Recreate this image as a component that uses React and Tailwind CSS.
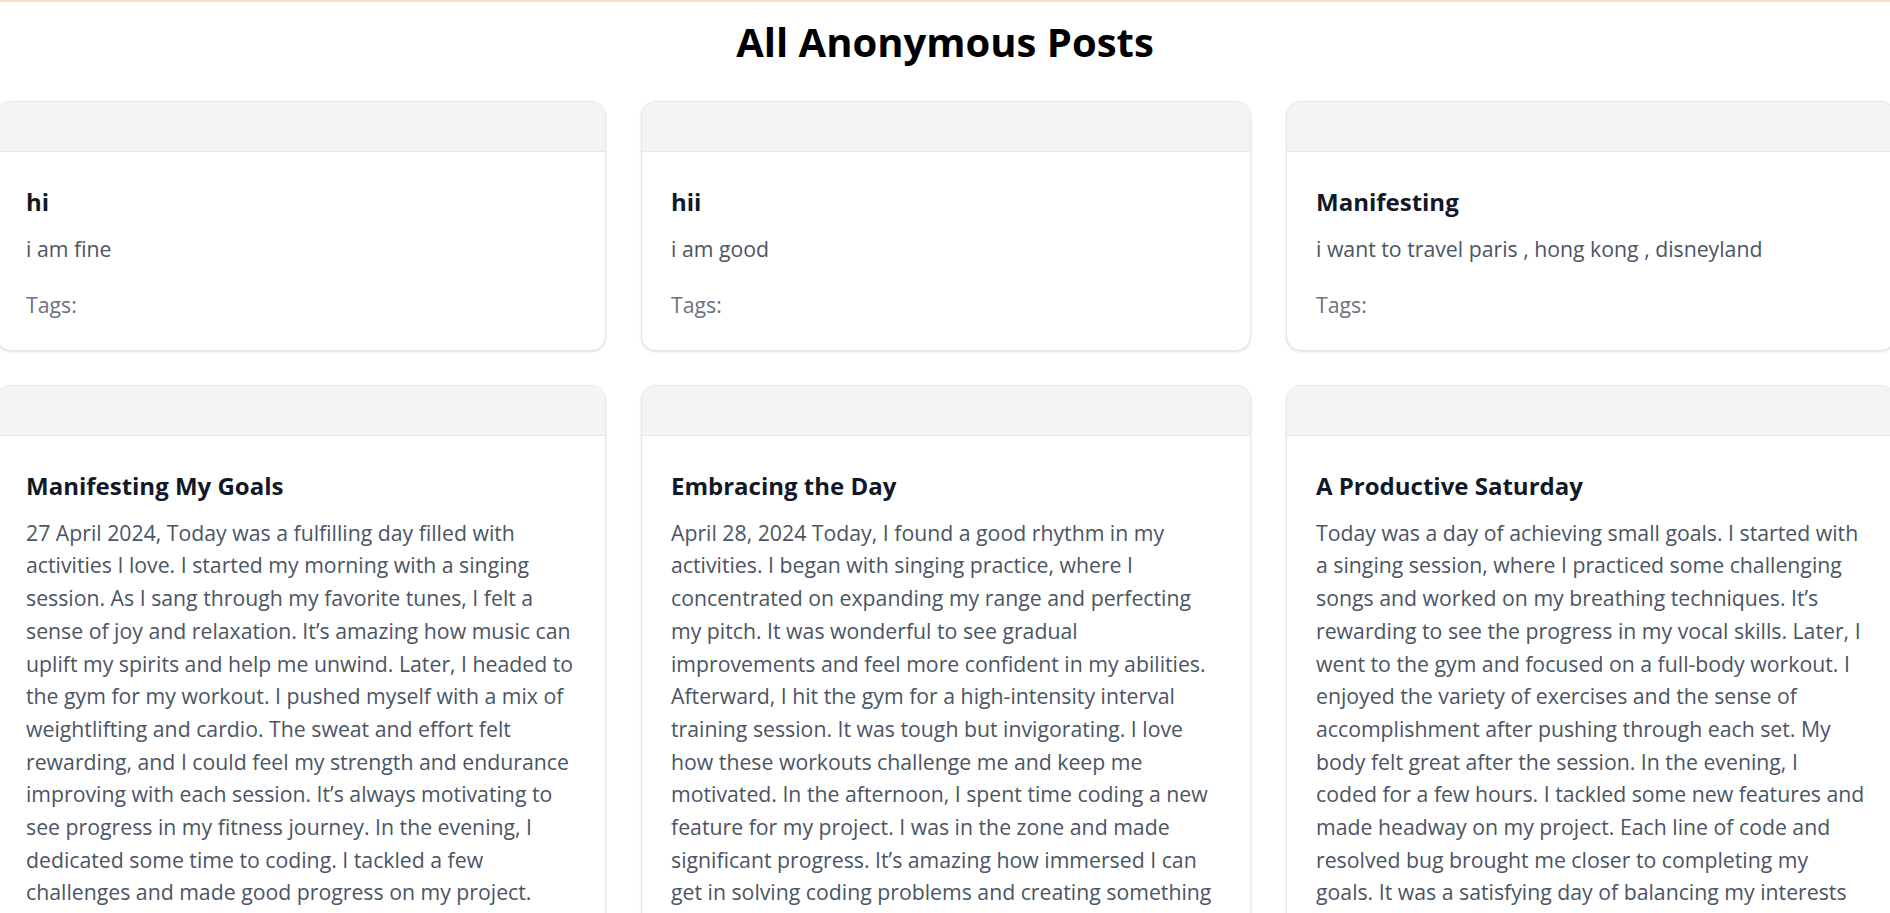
const POSTS = [
  { title: 'hi', body: 'i am fine' },
  { title: 'hii', body: 'i am good' },
  { title: 'Manifesting', body: 'i want to travel paris , hong kong , disneyland' },
  {
    title: 'Manifesting My Goals',
    body: '27 April 2024, Today was a fulfilling day filled with activities I love. I started my morning with a singing session. As I sang through my favorite tunes, I felt a sense of joy and relaxation. It’s amazing how music can uplift my spirits and help me unwind. Later, I headed to the gym for my workout. I pushed myself with a mix of weightlifting and cardio. The sweat and effort felt rewarding, and I could feel my strength and endurance improving with each session. It’s always motivating to see progress in my fitness journey. In the evening, I dedicated some time to coding. I tackled a few challenges and made good progress on my project. Overall, it was a balanced and productive day.',
  },
  {
    title: 'Embracing the Day',
    body: 'April 28, 2024 Today, I found a good rhythm in my activities. I began with singing practice, where I concentrated on expanding my range and perfecting my pitch. It was wonderful to see gradual improvements and feel more confident in my abilities. Afterward, I hit the gym for a high-intensity interval training session. It was tough but invigorating. I love how these workouts challenge me and keep me motivated. In the afternoon, I spent time coding a new feature for my project. I was in the zone and made significant progress. It’s amazing how immersed I can get in solving coding problems and creating something new.',
  },
  {
    title: 'A Productive Saturday',
    body: 'Today was a day of achieving small goals. I started with a singing session, where I practiced some challenging songs and worked on my breathing techniques. It’s rewarding to see the progress in my vocal skills. Later, I went to the gym and focused on a full-body workout. I enjoyed the variety of exercises and the sense of accomplishment after pushing through each set. My body felt great after the session. In the evening, I coded\u00a0for a few hours. I tackled some new features and made headway on my project. Each line of code and resolved bug brought me closer to completing my goals. It was a satisfying day of balancing my interests and responsibilities.',
  },
];

function PostCard({ post }) {
  return (
    <div className="rounded-[15px] border border-[#e5e7eb] bg-white shadow-sm overflow-hidden">
      <div className="h-[50px] bg-[#f3f4f6] border-b border-[#e5e7eb]" />
      <div className="pt-[32px] pb-[30px] pl-[29px] pr-[27px]">
        <h2 className="text-[24px] leading-[35px] font-bold text-[#111827] mb-[14px]">{post.title}</h2>
        <p className="text-[21.25px] leading-[32.7px] text-[#4b5563]">{post.body}</p>
        <div className="mt-[24px] text-[21.25px] leading-[30px] text-[#6b7280]">Tags:</div>
      </div>
    </div>
  );
}

export default function App() {
  return (
    <div className="h-screen overflow-hidden bg-white border-t-2 border-[#f3e3bf]" style={{ fontFamily: '"Open Sans", sans-serif' }}>
      <h1 className="mt-[15px] mb-[34px] text-center text-[40px] leading-[50px] font-bold text-black">
        All Anonymous Posts
      </h1>
      <div className="ml-[-4px] grid grid-cols-[repeat(3,610px)] gap-x-[35px] gap-y-[34px] items-start">
        {POSTS.map((p, i) => (
          <PostCard key={i} post={p} />
        ))}
      </div>
    </div>
  );
}
